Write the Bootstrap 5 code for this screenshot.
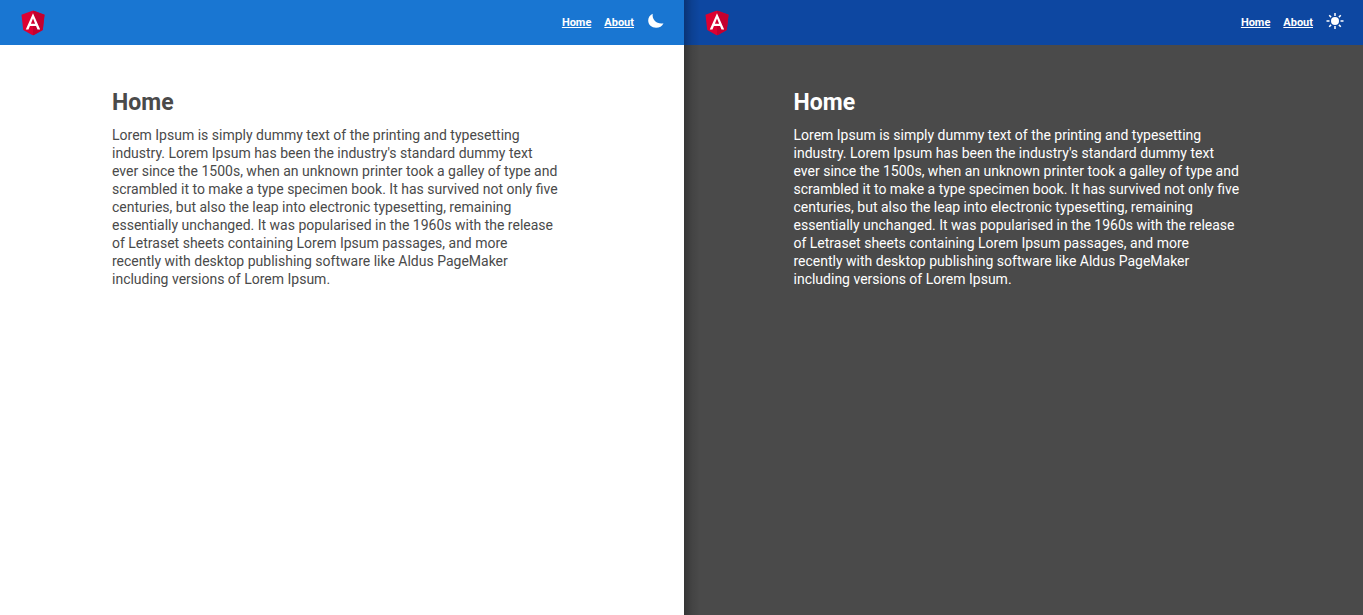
<!DOCTYPE html>
<html lang="en">
<head>
<meta charset="utf-8">
<meta name="viewport" content="width=device-width, initial-scale=1">
<title>Home</title>
<link href="https://cdn.jsdelivr.net/npm/bootstrap@5.3.0/dist/css/bootstrap.min.css" rel="stylesheet">
<style>
  body { font-family: Roboto, "Liberation Sans", sans-serif; font-size: 14px; line-height: 18px; }
  .pane { flex: 679 1 0; min-width: 0; }
  .pane-light { flex-grow: 684; --bar: #1976d2; background: #fff; color: #4a4a4a; }
  .pane-dark { --bar: #0d47a1; background: #4a4a4a; color: #fff; position: relative; }
  /* soft shade cast by the light pane onto the dark one */
  .pane-dark::before { content: ""; position: absolute; inset: 0 auto 0 0; width: 16px; pointer-events: none;
    background: linear-gradient(to right, rgba(0,0,0,.28), rgba(0,0,0,.09) 50%, transparent); }
  .topbar { background: var(--bar); height: 45px; padding: 0 19px 0 20px; }
  .topbar a { color: #fff; }
  .menu-link { font-size: 11px; font-weight: 700; }
  .menu { gap: 13px; }
  .theme-btn { width: 18px; height: 18px; color: #fff; margin-bottom: 4px; }
  .theme-btn svg, .brand svg { display: block; }
  .article { max-width: 460px; padding-top: 44px; }
  .article h1 { font-size: 23px; line-height: 28px; font-weight: 700; margin-bottom: 9px; }
</style>
</head>
<body>
<svg class="d-none" aria-hidden="true">
  <symbol id="shield" viewBox="30 30 190 200">
    <path fill="#dd0031" d="M125 30 31.900 63.200l14.200 123.100L125 230l78.900-43.700 14.200-123.100z"/>
    <path fill="#c3002f" d="M125 30v200l78.900-43.700 14.200-123.100z"/>
    <path fill="#fff" d="M125 52.100 66.800 182.600h21.700l11.700-29.200h49.400l11.700 29.200H183L125 52.100zm17 83.300h-34l17-40.900z"/>
  </symbol>
</svg>
<div class="d-flex min-vh-100">
  <section class="pane pane-light">
    <nav class="topbar d-flex align-items-center justify-content-between" aria-label="Light theme">
      <a class="brand" href="#" aria-label="Angular"><svg width="26" height="26" viewBox="25 25 200 210"><use href="#shield" x="25" y="30" width="200" height="200"/></svg></a>
      <div class="menu d-flex align-items-center">
        <a class="menu-link" href="#">Home</a>
        <a class="menu-link" href="#">About</a>
        <button type="button" class="theme-btn btn p-0 border-0" aria-label="Use dark theme">
          <svg width="18" height="18" viewBox="0 0 18 18" fill="currentColor"><path d="M5.700 1.700C2.800 3 1.200 5.500 1.200 8.600c0 4.300 3.500 7.200 7.900 7.200 3.300 0 6.100-1.700 7.400-4.600-6 1.400-11.800-3.100-10.800-9.500z"/></svg>
        </button>
      </div>
    </nav>
    <main class="article mx-auto">
      <h1>Home</h1>
      <p>Lorem Ipsum is simply dummy text of the printing and typesetting<br>
        industry. Lorem Ipsum has been the industry's standard dummy text<br>
        ever since the 1500s, when an unknown printer took a galley of type and<br>
        scrambled it to make a type specimen book. It has survived not only five<br>
        centuries, but also the leap into electronic typesetting, remaining<br>
        essentially unchanged. It was popularised in the 1960s with the release<br>
        of Letraset sheets containing Lorem Ipsum passages, and more<br>
        recently with desktop publishing software like Aldus PageMaker<br>
        including versions of Lorem Ipsum.</p>
    </main>
  </section>
  <section class="pane pane-dark">
    <nav class="topbar d-flex align-items-center justify-content-between" aria-label="Dark theme">
      <a class="brand" href="#" aria-label="Angular"><svg width="26" height="26" viewBox="25 25 200 210"><use href="#shield" x="25" y="30" width="200" height="200"/></svg></a>
      <div class="menu d-flex align-items-center">
        <a class="menu-link" href="#">Home</a>
        <a class="menu-link" href="#">About</a>
        <button type="button" class="theme-btn btn p-0 border-0" aria-label="Use light theme">
          <svg width="18" height="18" viewBox="0 0 18 18"><circle cx="9" cy="9" r="4" fill="currentColor"/><path stroke="currentColor" stroke-width="1.500" d="M9 1v3M9 14v3M.5 9h3M14.500 9h3M3.200 3.200l1.900 1.900M12.900 12.900l1.900 1.900M14.800 3.200l-1.900 1.900M5.100 12.900l-1.900 1.900"/></svg>
        </button>
      </div>
    </nav>
    <main class="article mx-auto">
      <h1>Home</h1>
      <p>Lorem Ipsum is simply dummy text of the printing and typesetting<br>
        industry. Lorem Ipsum has been the industry's standard dummy text<br>
        ever since the 1500s, when an unknown printer took a galley of type and<br>
        scrambled it to make a type specimen book. It has survived not only five<br>
        centuries, but also the leap into electronic typesetting, remaining<br>
        essentially unchanged. It was popularised in the 1960s with the release<br>
        of Letraset sheets containing Lorem Ipsum passages, and more<br>
        recently with desktop publishing software like Aldus PageMaker<br>
        including versions of Lorem Ipsum.</p>
    </main>
  </section>
</div>
<script src="https://cdn.jsdelivr.net/npm/bootstrap@5.3.0/dist/js/bootstrap.bundle.min.js"></script>
</body>
</html>
